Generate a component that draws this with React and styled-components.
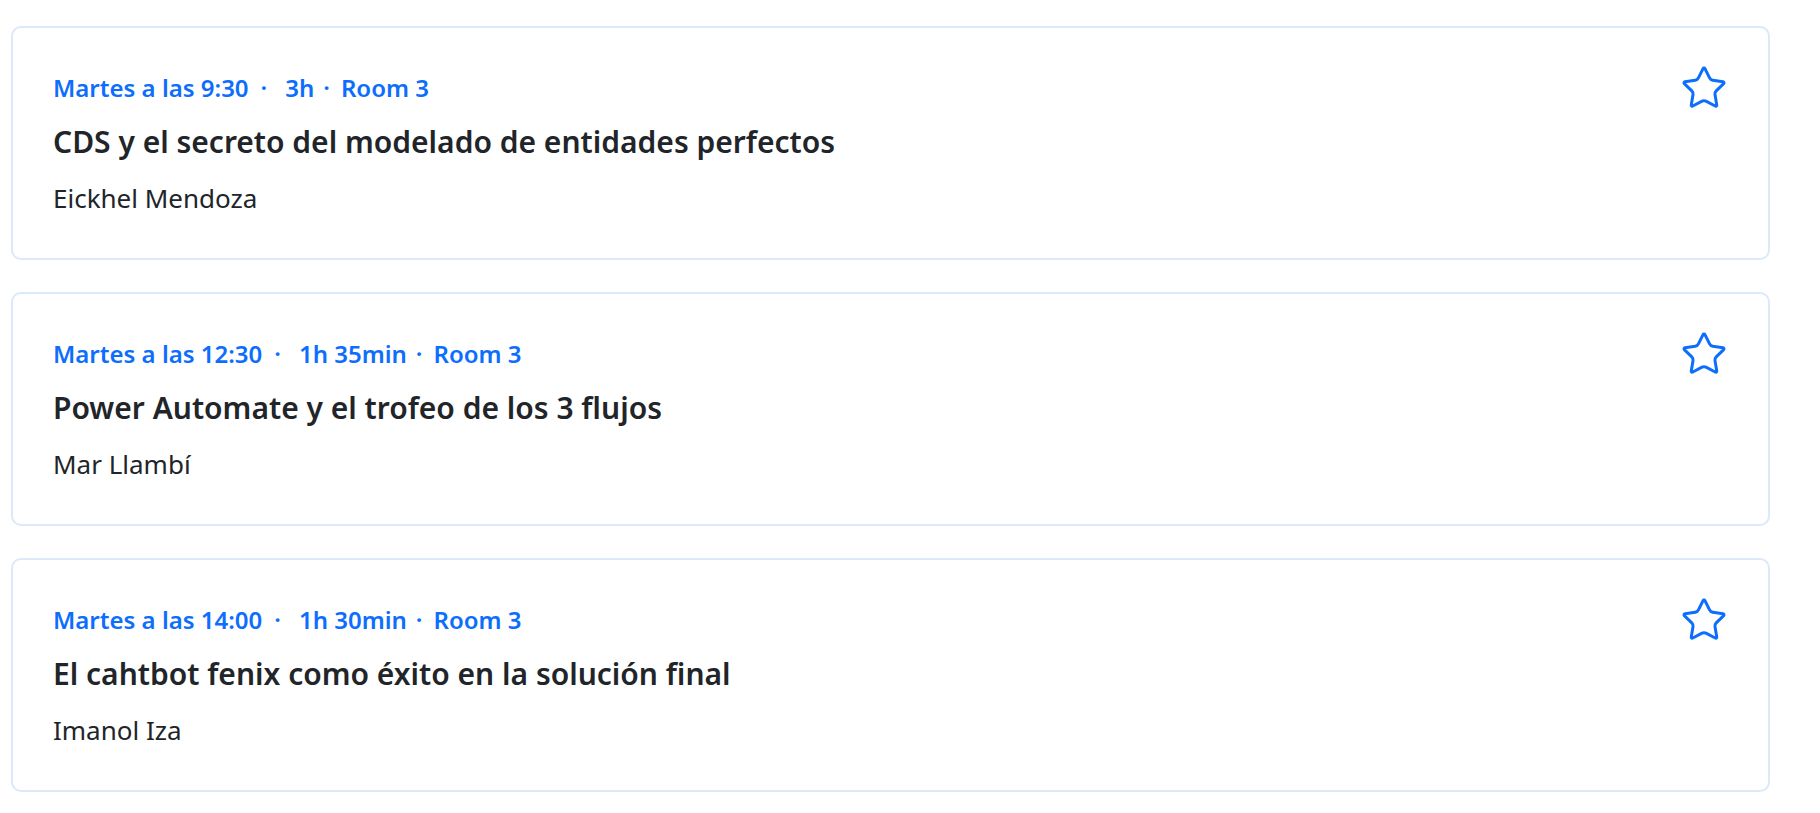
import React from 'react';
import styled, { createGlobalStyle } from 'styled-components';
import { Star } from 'lucide-react';

const GlobalStyle = createGlobalStyle`
  body {
    margin: 0;
    background: #fff;
    font-family: "Noto Sans", "Open Sans", sans-serif;
  }
`;

const List = styled.main`
  display: flex;
  flex-direction: column;
  gap: 32px;
  padding: 26px 50px 0 11px;
`;

const Card = styled.article`
  display: flex;
  justify-content: space-between;
  align-items: flex-start;
  height: 234px;
  box-sizing: border-box;
  padding: 42px 40px;
  border: 2px solid #dbe9fb;
  border-radius: 10px;
`;

const Body = styled.div`
  display: flex;
  flex-direction: column;
`;

const Meta = styled.div`
  color: #0d6efd;
  font-size: 24px;
  font-weight: 600;
  line-height: 36px;
  white-space: nowrap;
`;

const Sep = styled.span`
  margin: ${(p) => (p.$wide ? '0 18px 0 12px' : '0 11px 0 9px')};
`;

const Title = styled.h3`
  margin: 18px 0 0;
  color: #212529;
  font-size: 30px;
  font-weight: 600;
  line-height: 36px;
`;

const Speaker = styled.div`
  margin-top: 20px;
  color: #212529;
  font-size: 26px;
  line-height: 36px;
`;

const StarButton = styled.button`
  display: flex;
  margin-top: -6px;
  padding: 0;
  border: none;
  background: none;
  color: #0d6efd;
  cursor: pointer;
`;

const talks = [
  { when: 'Martes a las 9:30', length: '3h', room: 'Room 3', title: 'CDS y el secreto del modelado de entidades perfectos', speaker: 'Eickhel Mendoza' },
  { when: 'Martes a las 12:30', length: '1h 35min', room: 'Room 3', title: 'Power Automate y el trofeo de los 3 flujos', speaker: 'Mar Llambí' },
  { when: 'Martes a las 14:00', length: '1h 30min', room: 'Room 3', title: 'El cahtbot fenix como éxito en la solución final', speaker: 'Imanol Iza' },
];

const TalkCard = ({ talk }) => (
  <Card>
    <Body>
      <Meta>
        {talk.when}
        <Sep $wide>·</Sep>
        {talk.length}
        <Sep>·</Sep>
        {talk.room}
      </Meta>
      <Title>{talk.title}</Title>
      <Speaker>{talk.speaker}</Speaker>
    </Body>
    <StarButton aria-label="Favorito">
      <Star size={48} strokeWidth={1.5} />
    </StarButton>
  </Card>
);

export default function App() {
  return (
    <>
      <GlobalStyle />
      <List>
        {talks.map((t) => (
          <TalkCard key={t.when} talk={t} />
        ))}
      </List>
    </>
  );
}
